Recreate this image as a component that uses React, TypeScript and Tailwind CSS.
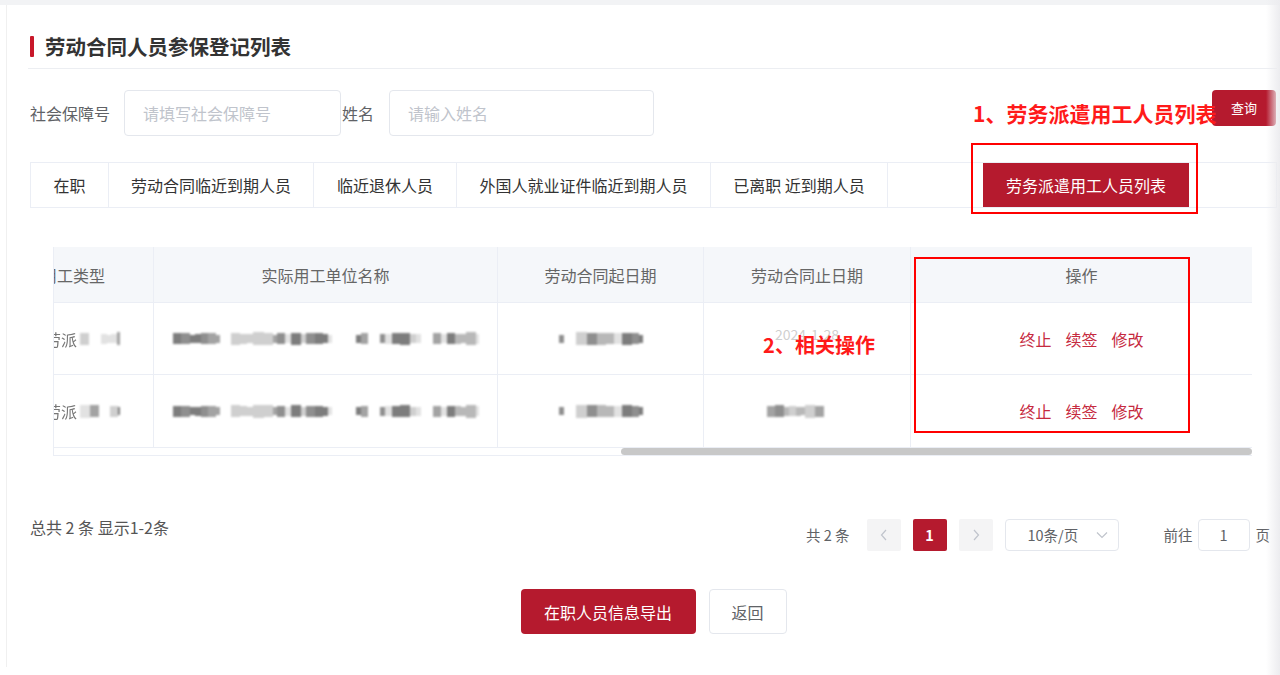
import React from 'react';

const FONT = { fontFamily: '"Noto Sans CJK SC", "Noto Sans", "Liberation Sans", sans-serif' };

// Tabs shown in the filter strip
const TABS = [
  { label: '在职', w: 'w-[78px]' },
  { label: '劳动合同临近到期人员', w: 'w-[205px]' },
  { label: '临近退休人员', w: 'w-[143px]' },
  { label: '外国人就业证件临近到期人员', w: 'w-[254px]' },
  { label: '已离职 近到期人员', w: 'w-[177px]' },
];

// Deterministic "mosaic" used for the blurred-out cells
function mosaic(seed: number, width: number) {
  const shades = ['#8f8f8f', '#a3a3a3', '#b8b8b8', '#cfcfcf', '#e2e2e2', '#7d7d7d'];
  const blocks: { w: number; c: string; h: number; gap: boolean }[] = [];
  let x = 0;
  let s = seed;
  while (x < width) {
    s = (s * 9301 + 49297) % 233280;
    const r = s / 233280;
    const w = 4 + Math.floor(r * 9);
    const gap = r > 0.86;
    blocks.push({ w, c: shades[Math.floor(r * 97) % shades.length], h: 8 + Math.floor(r * 7), gap });
    x += w;
  }
  return blocks;
}

function Blur({ seed, width }: { seed: number; width: number }) {
  return (
    <div className="flex items-center h-[16px] overflow-hidden blur-[0.8px]" style={{ width }}>
      {mosaic(seed, width).map((b, i) => (
        <span
          key={i}
          className="shrink-0"
          style={{ width: b.w, height: b.h, background: b.gap ? 'transparent' : b.c }}
        />
      ))}
    </div>
  );
}

function TypeCell({ seed }: { seed: number }) {
  return (
    <div className="w-[100px] h-full flex items-center overflow-hidden border-r border-[#ebeef5]">
      <span className="text-[16px] text-[#777] ml-[-9px] blur-[0.4px] whitespace-nowrap">劳派</span>
      <div className="ml-[3px]">
        <Blur seed={seed} width={40} />
      </div>
    </div>
  );
}

function Actions() {
  return (
    <div className="flex-1 h-full flex items-center justify-center gap-[14px] text-[16px] text-[#c62a3f]">
      <span>终止</span>
      <span>续签</span>
      <span>修改</span>
    </div>
  );
}

export default function App() {
  return (
    <div className="relative w-[1280px] h-[675px] overflow-hidden bg-white" style={FONT}>
      <div className="h-[5px] bg-[#f2f3f5]" />
      <div className="ml-[6px] w-[1274px] h-[662px] bg-white border-l border-[#f0f0f0] pl-[23px] pr-[3px] pt-[31px]">
        {/* Title */}
        <div className="flex items-center h-[21px]">
          <div className="w-[4px] h-[21px] bg-[#c8182a] rounded-[1px]" />
          <h2 className="ml-[11px] text-[20.5px] font-semibold text-[#333] leading-none">劳动合同人员参保登记列表</h2>
        </div>
        <div className="mt-[11px] -ml-[2px] border-b border-[#eceef2]" />

        {/* Search */}
        <div className="mt-[21px] flex items-center h-[46px]">
          <span className="text-[16px] text-[#606266]">社会保障号</span>
          <div className="ml-[14px] w-[217px] h-[46px] border border-[#e4e7ed] rounded-[4px] flex items-center pl-[18px] text-[16px] text-[#c0c4cc]">
            请填写社会保障号
          </div>
          <span className="ml-[1px] text-[16px] text-[#606266]">姓名</span>
          <div className="ml-[15px] w-[265px] h-[46px] border border-[#e4e7ed] rounded-[4px] flex items-center pl-[18px] text-[16px] text-[#c0c4cc]">
            请输入姓名
          </div>
          <div className="flex-1" />
          <button className="self-start w-[64px] h-[36px] bg-[#b51a2e] rounded-[4px] text-white text-[13px] mr-[1px]">查询</button>
        </div>

        {/* Tabs */}
        <div className="mt-[26px] flex items-stretch h-[46px] border border-[#ebeef5]">
          {TABS.map(t => (
            <div key={t.label} className={`${t.w} shrink-0 flex items-center justify-center border-r border-[#ebeef5] text-[16px] text-[#333]`}>
              {t.label}
            </div>
          ))}
          <button className="ml-[95px] w-[206px] h-[44px] bg-[#b51a2e] text-white text-[16px]">劳务派遣用工人员列表</button>
        </div>

        {/* Table */}
        <div className="mt-[39px] ml-[23px] w-[1199px] border-l border-[#ebeef5]">
          <div className="flex h-[55px] bg-[#f5f7fa] text-[16px] text-[#666]">
            <div className="w-[100px] flex items-center justify-end pr-[48px] overflow-hidden whitespace-nowrap border-r border-[#ebeef5]">用工类型</div>
            <div className="w-[344px] flex items-center justify-center border-r border-[#ebeef5]">实际用工单位名称</div>
            <div className="w-[206px] flex items-center justify-center border-r border-[#ebeef5]">劳动合同起日期</div>
            <div className="w-[207px] flex items-center justify-center border-r border-[#ebeef5]">劳动合同止日期</div>
            <div className="flex-1 flex items-center justify-center">操作</div>
          </div>

          <div className="flex h-[72px] border-t border-[#ebeef5] items-center">
            <TypeCell seed={11} />
            <div className="w-[344px] h-full flex items-center justify-center border-r border-[#ebeef5]"><Blur seed={7} width={306} /></div>
            <div className="w-[206px] h-full flex items-center justify-center border-r border-[#ebeef5]"><Blur seed={23} width={84} /></div>
            <div className="w-[207px] h-full flex items-center justify-center border-r border-[#ebeef5] text-[14px] text-[#888] pb-[8px]">2024-1-28</div>
            <Actions />
          </div>

          <div className="flex h-[73px] border-t border-[#ebeef5] items-center">
            <TypeCell seed={13} />
            <div className="w-[344px] h-full flex items-center justify-center border-r border-[#ebeef5]"><Blur seed={7} width={306} /></div>
            <div className="w-[206px] h-full flex items-center justify-center border-r border-[#ebeef5]"><Blur seed={23} width={84} /></div>
            <div className="w-[207px] h-full flex items-center justify-center border-r border-[#ebeef5]"><Blur seed={31} width={80} /></div>
            <Actions />
          </div>

          {/* horizontal scrollbar */}
          <div className="h-[9px] border-t border-[#ebeef5] border-b flex items-center">
            <div className="ml-[567px] flex-1 h-[7px] rounded-full bg-[#c8c8c8]" />
          </div>
        </div>

        {/* Footer / pagination */}
        <div className="mt-[63px] flex items-start">
          <span className="text-[16px] leading-[16px] text-[#555]">总共 2 条 显示1-2条</span>
          <div className="flex-1" />
          <div className="flex items-center h-[32px] text-[14.5px] text-[#606266] mr-[7px]">
            <span>共 2 条</span>
            <div className="ml-[17px] w-[34px] h-[32px] bg-[#f4f4f5] rounded-[2px] flex items-center justify-center text-[#c0c4cc]">
              <svg width="8" height="12" viewBox="0 0 8 12" fill="none" stroke="currentColor" strokeWidth="1.2"><path d="M6 1 1.5 6 6 11" /></svg>
            </div>
            <div className="ml-[12px] w-[34px] h-[32px] bg-[#b51a2e] rounded-[2px] flex items-center justify-center text-white font-bold">1</div>
            <div className="ml-[12px] w-[34px] h-[32px] bg-[#f4f4f5] rounded-[2px] flex items-center justify-center text-[#c0c4cc]">
              <svg width="8" height="12" viewBox="0 0 8 12" fill="none" stroke="currentColor" strokeWidth="1.2"><path d="M2 1 6.5 6 2 11" /></svg>
            </div>
            <div className="ml-[12px] w-[114px] h-[32px] border border-[#e4e7ed] rounded-[4px] flex items-center pl-[22px] pr-[10px]">
              <span className="text-[#606266]">10条/页</span>
              <div className="flex-1" />
              <svg width="12" height="8" viewBox="0 0 12 8" fill="none" stroke="#c0c4cc" strokeWidth="1.2"><path d="M1 1.5 6 6.5 11 1.5" /></svg>
            </div>
            <span className="ml-[45px]">前往</span>
            <div className="ml-[5px] w-[52px] h-[32px] border border-[#e4e7ed] rounded-[4px] flex items-center justify-center">1</div>
            <span className="ml-[6px]">页</span>
          </div>
        </div>

        {/* Bottom buttons */}
        <div className="mt-[38px] flex justify-center gap-[13px]">
          <button className="w-[175px] h-[45px] bg-[#b51a2e] rounded-[4px] text-white text-[16px]">在职人员信息导出</button>
          <button className="w-[78px] h-[45px] bg-white border border-[#e4e7ed] rounded-[4px] text-[#606266] text-[16px]">返回</button>
        </div>
      </div>

      {/* right edge shade */}
      <div className="absolute top-0 right-0 w-[14px] h-full bg-gradient-to-r from-transparent to-[#ececef]" />

      {/* Annotations drawn over the screenshot */}
      <div className="absolute left-[973px] top-[99px] text-[21px] font-bold text-[#ff1a1a] leading-[28px] whitespace-nowrap">1、劳务派遣用工人员列表</div>
      <div className="absolute left-[971px] top-[143px] w-[227px] h-[71px] border-2 border-[#ff0000]" />
      <div className="absolute left-[745px] top-[325px] w-[148px] h-[40px] bg-white/60 flex items-center justify-center text-[20px] font-bold text-[#ff1a1a]">2、相关操作</div>
      <div className="absolute left-[914px] top-[257px] w-[276px] h-[176px] border-2 border-[#ff0000]" />
    </div>
  );
}
